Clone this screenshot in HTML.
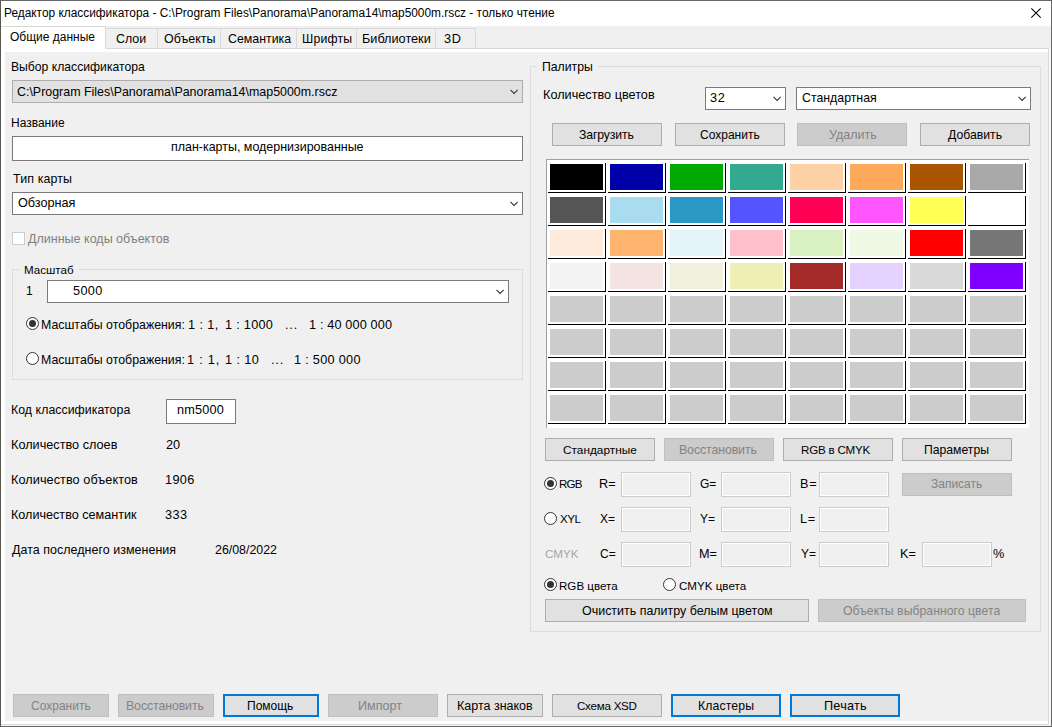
<!DOCTYPE html>
<html><head><meta charset="utf-8"><title>Редактор классификатора</title>
<style>
html,body{margin:0;padding:0;width:1052px;height:727px;overflow:hidden;background:#fff}
.b{position:absolute;box-sizing:border-box}
.t{position:absolute;font-family:"Liberation Sans",sans-serif;font-size:12px;line-height:12px;white-space:pre;color:#000}
</style></head><body>
<div class="b" style="left:0px;top:0px;width:1052px;height:727px;background:#ffffff;border:1px solid #676767;border-left-color:#58564f"></div>
<div class="b" style="left:1px;top:26px;width:1050px;height:22px;background:#f0f0f0"></div>
<div class="b" style="left:1px;top:48px;width:1048px;height:677px;background:#ffffff;border:1px solid #d9d9d9;border-left:none"></div>
<div class="b" style="left:1049px;top:48px;width:2px;height:678px;background:#f7f7f7"></div>
<div class="b" style="left:1px;top:725px;width:1050px;height:1px;background:#f7f7f7"></div>
<div class="b" style="left:5px;top:52px;width:1043px;height:669px;background:#f0f0f0"></div>
<div class="b" style="left:105px;top:28px;width:53px;height:21px;background:#f0f0f0;border:1px solid #d9d9d9"></div>
<div class="b" style="left:157px;top:28px;width:64px;height:21px;background:#f0f0f0;border:1px solid #d9d9d9"></div>
<div class="b" style="left:220px;top:28px;width:77px;height:21px;background:#f0f0f0;border:1px solid #d9d9d9"></div>
<div class="b" style="left:296px;top:28px;width:61px;height:21px;background:#f0f0f0;border:1px solid #d9d9d9"></div>
<div class="b" style="left:356px;top:28px;width:80px;height:21px;background:#f0f0f0;border:1px solid #d9d9d9"></div>
<div class="b" style="left:435px;top:28px;width:41px;height:21px;background:#f0f0f0;border:1px solid #d9d9d9"></div>
<div class="b" style="left:1px;top:27px;width:104px;height:25px;background:#ffffff"></div>
<div class="b" style="left:1px;top:26px;width:105px;height:1px;background:#d9d9d9"></div>
<div class="b" style="left:105px;top:26px;width:1px;height:23px;background:#d9d9d9"></div>
<div class="b" style="left:12px;top:80px;width:511px;height:23px;background:#e1e1e1;border:1px solid #adadad"></div>
<svg class="b" style="left:510px;top:89px" width="10" height="7" viewBox="0 0 10 7"><polyline points="0.5,0.95 4.1,4.45 7.7,0.95" fill="none" stroke="#333" stroke-width="1.05"/></svg>
<div class="b" style="left:12px;top:136px;width:511px;height:25px;background:#ffffff;border:1px solid #7a7a7a"></div>
<div class="b" style="left:12px;top:192px;width:511px;height:23px;background:#fff;border:1px solid #7a7a7a"></div>
<svg class="b" style="left:510px;top:201px" width="10" height="7" viewBox="0 0 10 7"><polyline points="0.5,0.95 4.1,4.45 7.7,0.95" fill="none" stroke="#333" stroke-width="1.05"/></svg>
<div class="b" style="left:12px;top:232px;width:13px;height:13px;background:#ffffff;border:1px solid #cccccc"></div>
<div class="b" style="left:12px;top:269px;width:511px;height:111px;border:1px solid #dcdcdc"></div>
<div class="b" style="left:19px;top:269px;width:60px;height:1px;background:#f0f0f0"></div>
<div class="b" style="left:47px;top:280px;width:462px;height:23px;background:#fff;border:1px solid #7a7a7a"></div>
<svg class="b" style="left:496px;top:289px" width="10" height="7" viewBox="0 0 10 7"><polyline points="0.5,0.95 4.1,4.45 7.7,0.95" fill="none" stroke="#333" stroke-width="1.05"/></svg>
<svg class="b" style="left:26px;top:317px" width="13" height="13" viewBox="0 0 13 13"><circle cx="6.5" cy="6.5" r="6" fill="#fff" stroke="#333" stroke-width="1"/><circle cx="6.5" cy="6.5" r="3.5" fill="#333"/></svg>
<svg class="b" style="left:26px;top:352px" width="13" height="13" viewBox="0 0 13 13"><circle cx="6.5" cy="6.5" r="6" fill="#fff" stroke="#333" stroke-width="1"/></svg>
<div class="b" style="left:166px;top:399px;width:70px;height:25px;background:#ffffff;border:1px solid #7a7a7a"></div>
<div class="b" style="left:530px;top:66px;width:511px;height:566px;border:1px solid #dcdcdc"></div>
<div class="b" style="left:537px;top:66px;width:61px;height:1px;background:#f0f0f0"></div>
<div class="b" style="left:705px;top:87px;width:81px;height:23px;background:#fff;border:1px solid #7a7a7a"></div>
<svg class="b" style="left:773px;top:96px" width="10" height="7" viewBox="0 0 10 7"><polyline points="0.5,0.95 4.1,4.45 7.7,0.95" fill="none" stroke="#333" stroke-width="1.05"/></svg>
<div class="b" style="left:796px;top:87px;width:235px;height:23px;background:#fff;border:1px solid #7a7a7a"></div>
<svg class="b" style="left:1018px;top:96px" width="10" height="7" viewBox="0 0 10 7"><polyline points="0.5,0.95 4.1,4.45 7.7,0.95" fill="none" stroke="#333" stroke-width="1.05"/></svg>
<div class="b" style="left:552px;top:123px;width:110px;height:23px;background:#e1e1e1;border:1px solid #adadad"></div>
<div class="b" style="left:675px;top:123px;width:110px;height:23px;background:#e1e1e1;border:1px solid #adadad"></div>
<div class="b" style="left:797px;top:123px;width:110px;height:23px;background:#cccccc;border:1px solid #bfbfbf"></div>
<div class="b" style="left:920px;top:123px;width:110px;height:23px;background:#e1e1e1;border:1px solid #adadad"></div>
<div class="b" style="left:546px;top:159px;width:483px;height:269px;background:#ffffff;border-top:1px solid #a0a0a0;border-left:1px solid #a0a0a0"></div>
<div class="b" style="left:550px;top:164px;width:53px;height:26px;background:#000000"></div>
<div class="b" style="left:605px;top:163px;width:1px;height:30px;background:#000"></div>
<div class="b" style="left:548px;top:192px;width:58px;height:1px;background:#000"></div>
<div class="b" style="left:610px;top:164px;width:53px;height:26px;background:#0000a8"></div>
<div class="b" style="left:665px;top:163px;width:1px;height:30px;background:#000"></div>
<div class="b" style="left:608px;top:192px;width:58px;height:1px;background:#000"></div>
<div class="b" style="left:670px;top:164px;width:53px;height:26px;background:#00aa00"></div>
<div class="b" style="left:725px;top:163px;width:1px;height:30px;background:#000"></div>
<div class="b" style="left:668px;top:192px;width:58px;height:1px;background:#000"></div>
<div class="b" style="left:730px;top:164px;width:53px;height:26px;background:#33aa8f"></div>
<div class="b" style="left:785px;top:163px;width:1px;height:30px;background:#000"></div>
<div class="b" style="left:728px;top:192px;width:58px;height:1px;background:#000"></div>
<div class="b" style="left:790px;top:164px;width:53px;height:26px;background:#fdd1a5"></div>
<div class="b" style="left:845px;top:163px;width:1px;height:30px;background:#000"></div>
<div class="b" style="left:788px;top:192px;width:58px;height:1px;background:#000"></div>
<div class="b" style="left:850px;top:164px;width:53px;height:26px;background:#fea95a"></div>
<div class="b" style="left:905px;top:163px;width:1px;height:30px;background:#000"></div>
<div class="b" style="left:848px;top:192px;width:58px;height:1px;background:#000"></div>
<div class="b" style="left:910px;top:164px;width:53px;height:26px;background:#aa5500"></div>
<div class="b" style="left:965px;top:163px;width:1px;height:30px;background:#000"></div>
<div class="b" style="left:908px;top:192px;width:58px;height:1px;background:#000"></div>
<div class="b" style="left:970px;top:164px;width:53px;height:26px;background:#a9a9a9"></div>
<div class="b" style="left:1025px;top:163px;width:1px;height:30px;background:#000"></div>
<div class="b" style="left:968px;top:192px;width:58px;height:1px;background:#000"></div>
<div class="b" style="left:550px;top:197px;width:53px;height:26px;background:#555555"></div>
<div class="b" style="left:605px;top:196px;width:1px;height:30px;background:#000"></div>
<div class="b" style="left:548px;top:225px;width:58px;height:1px;background:#000"></div>
<div class="b" style="left:610px;top:197px;width:53px;height:26px;background:#a9dcee"></div>
<div class="b" style="left:665px;top:196px;width:1px;height:30px;background:#000"></div>
<div class="b" style="left:608px;top:225px;width:58px;height:1px;background:#000"></div>
<div class="b" style="left:670px;top:197px;width:53px;height:26px;background:#2a97c5"></div>
<div class="b" style="left:725px;top:196px;width:1px;height:30px;background:#000"></div>
<div class="b" style="left:668px;top:225px;width:58px;height:1px;background:#000"></div>
<div class="b" style="left:730px;top:197px;width:53px;height:26px;background:#5555ff"></div>
<div class="b" style="left:785px;top:196px;width:1px;height:30px;background:#000"></div>
<div class="b" style="left:728px;top:225px;width:58px;height:1px;background:#000"></div>
<div class="b" style="left:790px;top:197px;width:53px;height:26px;background:#ff0055"></div>
<div class="b" style="left:845px;top:196px;width:1px;height:30px;background:#000"></div>
<div class="b" style="left:788px;top:225px;width:58px;height:1px;background:#000"></div>
<div class="b" style="left:850px;top:197px;width:53px;height:26px;background:#ff55ff"></div>
<div class="b" style="left:905px;top:196px;width:1px;height:30px;background:#000"></div>
<div class="b" style="left:848px;top:225px;width:58px;height:1px;background:#000"></div>
<div class="b" style="left:910px;top:197px;width:53px;height:26px;background:#ffff55"></div>
<div class="b" style="left:965px;top:196px;width:1px;height:30px;background:#000"></div>
<div class="b" style="left:908px;top:225px;width:58px;height:1px;background:#000"></div>
<div class="b" style="left:970px;top:197px;width:53px;height:26px;background:#ffffff"></div>
<div class="b" style="left:1025px;top:196px;width:1px;height:30px;background:#000"></div>
<div class="b" style="left:968px;top:225px;width:58px;height:1px;background:#000"></div>
<div class="b" style="left:550px;top:230px;width:53px;height:26px;background:#fdeadb"></div>
<div class="b" style="left:605px;top:229px;width:1px;height:30px;background:#000"></div>
<div class="b" style="left:548px;top:258px;width:58px;height:1px;background:#000"></div>
<div class="b" style="left:610px;top:230px;width:53px;height:26px;background:#ffb46d"></div>
<div class="b" style="left:665px;top:229px;width:1px;height:30px;background:#000"></div>
<div class="b" style="left:608px;top:258px;width:58px;height:1px;background:#000"></div>
<div class="b" style="left:670px;top:230px;width:53px;height:26px;background:#e5f3fb"></div>
<div class="b" style="left:725px;top:229px;width:1px;height:30px;background:#000"></div>
<div class="b" style="left:668px;top:258px;width:58px;height:1px;background:#000"></div>
<div class="b" style="left:730px;top:230px;width:53px;height:26px;background:#ffc0cb"></div>
<div class="b" style="left:785px;top:229px;width:1px;height:30px;background:#000"></div>
<div class="b" style="left:728px;top:258px;width:58px;height:1px;background:#000"></div>
<div class="b" style="left:790px;top:230px;width:53px;height:26px;background:#d9f1c1"></div>
<div class="b" style="left:845px;top:229px;width:1px;height:30px;background:#000"></div>
<div class="b" style="left:788px;top:258px;width:58px;height:1px;background:#000"></div>
<div class="b" style="left:850px;top:230px;width:53px;height:26px;background:#f0f8e6"></div>
<div class="b" style="left:905px;top:229px;width:1px;height:30px;background:#000"></div>
<div class="b" style="left:848px;top:258px;width:58px;height:1px;background:#000"></div>
<div class="b" style="left:910px;top:230px;width:53px;height:26px;background:#ff0000"></div>
<div class="b" style="left:965px;top:229px;width:1px;height:30px;background:#000"></div>
<div class="b" style="left:908px;top:258px;width:58px;height:1px;background:#000"></div>
<div class="b" style="left:970px;top:230px;width:53px;height:26px;background:#777777"></div>
<div class="b" style="left:1025px;top:229px;width:1px;height:30px;background:#000"></div>
<div class="b" style="left:968px;top:258px;width:58px;height:1px;background:#000"></div>
<div class="b" style="left:550px;top:263px;width:53px;height:26px;background:#f3f3f3"></div>
<div class="b" style="left:605px;top:262px;width:1px;height:30px;background:#000"></div>
<div class="b" style="left:548px;top:291px;width:58px;height:1px;background:#000"></div>
<div class="b" style="left:610px;top:263px;width:53px;height:26px;background:#f3e3e3"></div>
<div class="b" style="left:665px;top:262px;width:1px;height:30px;background:#000"></div>
<div class="b" style="left:608px;top:291px;width:58px;height:1px;background:#000"></div>
<div class="b" style="left:670px;top:263px;width:53px;height:26px;background:#f1f0dc"></div>
<div class="b" style="left:725px;top:262px;width:1px;height:30px;background:#000"></div>
<div class="b" style="left:668px;top:291px;width:58px;height:1px;background:#000"></div>
<div class="b" style="left:730px;top:263px;width:53px;height:26px;background:#efefb5"></div>
<div class="b" style="left:785px;top:262px;width:1px;height:30px;background:#000"></div>
<div class="b" style="left:728px;top:291px;width:58px;height:1px;background:#000"></div>
<div class="b" style="left:790px;top:263px;width:53px;height:26px;background:#a52a2a"></div>
<div class="b" style="left:845px;top:262px;width:1px;height:30px;background:#000"></div>
<div class="b" style="left:788px;top:291px;width:58px;height:1px;background:#000"></div>
<div class="b" style="left:850px;top:263px;width:53px;height:26px;background:#e6d2ff"></div>
<div class="b" style="left:905px;top:262px;width:1px;height:30px;background:#000"></div>
<div class="b" style="left:848px;top:291px;width:58px;height:1px;background:#000"></div>
<div class="b" style="left:910px;top:263px;width:53px;height:26px;background:#d9d9d9"></div>
<div class="b" style="left:965px;top:262px;width:1px;height:30px;background:#000"></div>
<div class="b" style="left:908px;top:291px;width:58px;height:1px;background:#000"></div>
<div class="b" style="left:970px;top:263px;width:53px;height:26px;background:#8000ff"></div>
<div class="b" style="left:1025px;top:262px;width:1px;height:30px;background:#000"></div>
<div class="b" style="left:968px;top:291px;width:58px;height:1px;background:#000"></div>
<div class="b" style="left:550px;top:296px;width:53px;height:26px;background:#cccccc"></div>
<div class="b" style="left:605px;top:295px;width:1px;height:30px;background:#000"></div>
<div class="b" style="left:548px;top:324px;width:58px;height:1px;background:#000"></div>
<div class="b" style="left:610px;top:296px;width:53px;height:26px;background:#cccccc"></div>
<div class="b" style="left:665px;top:295px;width:1px;height:30px;background:#000"></div>
<div class="b" style="left:608px;top:324px;width:58px;height:1px;background:#000"></div>
<div class="b" style="left:670px;top:296px;width:53px;height:26px;background:#cccccc"></div>
<div class="b" style="left:725px;top:295px;width:1px;height:30px;background:#000"></div>
<div class="b" style="left:668px;top:324px;width:58px;height:1px;background:#000"></div>
<div class="b" style="left:730px;top:296px;width:53px;height:26px;background:#cccccc"></div>
<div class="b" style="left:785px;top:295px;width:1px;height:30px;background:#000"></div>
<div class="b" style="left:728px;top:324px;width:58px;height:1px;background:#000"></div>
<div class="b" style="left:790px;top:296px;width:53px;height:26px;background:#cccccc"></div>
<div class="b" style="left:845px;top:295px;width:1px;height:30px;background:#000"></div>
<div class="b" style="left:788px;top:324px;width:58px;height:1px;background:#000"></div>
<div class="b" style="left:850px;top:296px;width:53px;height:26px;background:#cccccc"></div>
<div class="b" style="left:905px;top:295px;width:1px;height:30px;background:#000"></div>
<div class="b" style="left:848px;top:324px;width:58px;height:1px;background:#000"></div>
<div class="b" style="left:910px;top:296px;width:53px;height:26px;background:#cccccc"></div>
<div class="b" style="left:965px;top:295px;width:1px;height:30px;background:#000"></div>
<div class="b" style="left:908px;top:324px;width:58px;height:1px;background:#000"></div>
<div class="b" style="left:970px;top:296px;width:53px;height:26px;background:#cccccc"></div>
<div class="b" style="left:1025px;top:295px;width:1px;height:30px;background:#000"></div>
<div class="b" style="left:968px;top:324px;width:58px;height:1px;background:#000"></div>
<div class="b" style="left:550px;top:329px;width:53px;height:26px;background:#cccccc"></div>
<div class="b" style="left:605px;top:328px;width:1px;height:30px;background:#000"></div>
<div class="b" style="left:548px;top:357px;width:58px;height:1px;background:#000"></div>
<div class="b" style="left:610px;top:329px;width:53px;height:26px;background:#cccccc"></div>
<div class="b" style="left:665px;top:328px;width:1px;height:30px;background:#000"></div>
<div class="b" style="left:608px;top:357px;width:58px;height:1px;background:#000"></div>
<div class="b" style="left:670px;top:329px;width:53px;height:26px;background:#cccccc"></div>
<div class="b" style="left:725px;top:328px;width:1px;height:30px;background:#000"></div>
<div class="b" style="left:668px;top:357px;width:58px;height:1px;background:#000"></div>
<div class="b" style="left:730px;top:329px;width:53px;height:26px;background:#cccccc"></div>
<div class="b" style="left:785px;top:328px;width:1px;height:30px;background:#000"></div>
<div class="b" style="left:728px;top:357px;width:58px;height:1px;background:#000"></div>
<div class="b" style="left:790px;top:329px;width:53px;height:26px;background:#cccccc"></div>
<div class="b" style="left:845px;top:328px;width:1px;height:30px;background:#000"></div>
<div class="b" style="left:788px;top:357px;width:58px;height:1px;background:#000"></div>
<div class="b" style="left:850px;top:329px;width:53px;height:26px;background:#cccccc"></div>
<div class="b" style="left:905px;top:328px;width:1px;height:30px;background:#000"></div>
<div class="b" style="left:848px;top:357px;width:58px;height:1px;background:#000"></div>
<div class="b" style="left:910px;top:329px;width:53px;height:26px;background:#cccccc"></div>
<div class="b" style="left:965px;top:328px;width:1px;height:30px;background:#000"></div>
<div class="b" style="left:908px;top:357px;width:58px;height:1px;background:#000"></div>
<div class="b" style="left:970px;top:329px;width:53px;height:26px;background:#cccccc"></div>
<div class="b" style="left:1025px;top:328px;width:1px;height:30px;background:#000"></div>
<div class="b" style="left:968px;top:357px;width:58px;height:1px;background:#000"></div>
<div class="b" style="left:550px;top:362px;width:53px;height:26px;background:#cccccc"></div>
<div class="b" style="left:605px;top:361px;width:1px;height:30px;background:#000"></div>
<div class="b" style="left:548px;top:390px;width:58px;height:1px;background:#000"></div>
<div class="b" style="left:610px;top:362px;width:53px;height:26px;background:#cccccc"></div>
<div class="b" style="left:665px;top:361px;width:1px;height:30px;background:#000"></div>
<div class="b" style="left:608px;top:390px;width:58px;height:1px;background:#000"></div>
<div class="b" style="left:670px;top:362px;width:53px;height:26px;background:#cccccc"></div>
<div class="b" style="left:725px;top:361px;width:1px;height:30px;background:#000"></div>
<div class="b" style="left:668px;top:390px;width:58px;height:1px;background:#000"></div>
<div class="b" style="left:730px;top:362px;width:53px;height:26px;background:#cccccc"></div>
<div class="b" style="left:785px;top:361px;width:1px;height:30px;background:#000"></div>
<div class="b" style="left:728px;top:390px;width:58px;height:1px;background:#000"></div>
<div class="b" style="left:790px;top:362px;width:53px;height:26px;background:#cccccc"></div>
<div class="b" style="left:845px;top:361px;width:1px;height:30px;background:#000"></div>
<div class="b" style="left:788px;top:390px;width:58px;height:1px;background:#000"></div>
<div class="b" style="left:850px;top:362px;width:53px;height:26px;background:#cccccc"></div>
<div class="b" style="left:905px;top:361px;width:1px;height:30px;background:#000"></div>
<div class="b" style="left:848px;top:390px;width:58px;height:1px;background:#000"></div>
<div class="b" style="left:910px;top:362px;width:53px;height:26px;background:#cccccc"></div>
<div class="b" style="left:965px;top:361px;width:1px;height:30px;background:#000"></div>
<div class="b" style="left:908px;top:390px;width:58px;height:1px;background:#000"></div>
<div class="b" style="left:970px;top:362px;width:53px;height:26px;background:#cccccc"></div>
<div class="b" style="left:1025px;top:361px;width:1px;height:30px;background:#000"></div>
<div class="b" style="left:968px;top:390px;width:58px;height:1px;background:#000"></div>
<div class="b" style="left:550px;top:395px;width:53px;height:26px;background:#cccccc"></div>
<div class="b" style="left:605px;top:394px;width:1px;height:30px;background:#000"></div>
<div class="b" style="left:548px;top:423px;width:58px;height:1px;background:#000"></div>
<div class="b" style="left:610px;top:395px;width:53px;height:26px;background:#cccccc"></div>
<div class="b" style="left:665px;top:394px;width:1px;height:30px;background:#000"></div>
<div class="b" style="left:608px;top:423px;width:58px;height:1px;background:#000"></div>
<div class="b" style="left:670px;top:395px;width:53px;height:26px;background:#cccccc"></div>
<div class="b" style="left:725px;top:394px;width:1px;height:30px;background:#000"></div>
<div class="b" style="left:668px;top:423px;width:58px;height:1px;background:#000"></div>
<div class="b" style="left:730px;top:395px;width:53px;height:26px;background:#cccccc"></div>
<div class="b" style="left:785px;top:394px;width:1px;height:30px;background:#000"></div>
<div class="b" style="left:728px;top:423px;width:58px;height:1px;background:#000"></div>
<div class="b" style="left:790px;top:395px;width:53px;height:26px;background:#cccccc"></div>
<div class="b" style="left:845px;top:394px;width:1px;height:30px;background:#000"></div>
<div class="b" style="left:788px;top:423px;width:58px;height:1px;background:#000"></div>
<div class="b" style="left:850px;top:395px;width:53px;height:26px;background:#cccccc"></div>
<div class="b" style="left:905px;top:394px;width:1px;height:30px;background:#000"></div>
<div class="b" style="left:848px;top:423px;width:58px;height:1px;background:#000"></div>
<div class="b" style="left:910px;top:395px;width:53px;height:26px;background:#cccccc"></div>
<div class="b" style="left:965px;top:394px;width:1px;height:30px;background:#000"></div>
<div class="b" style="left:908px;top:423px;width:58px;height:1px;background:#000"></div>
<div class="b" style="left:970px;top:395px;width:53px;height:26px;background:#cccccc"></div>
<div class="b" style="left:1025px;top:394px;width:1px;height:30px;background:#000"></div>
<div class="b" style="left:968px;top:423px;width:58px;height:1px;background:#000"></div>
<div class="b" style="left:545px;top:438px;width:110px;height:23px;background:#e1e1e1;border:1px solid #adadad"></div>
<div class="b" style="left:664px;top:438px;width:110px;height:23px;background:#cccccc;border:1px solid #bfbfbf"></div>
<div class="b" style="left:783px;top:438px;width:110px;height:23px;background:#e1e1e1;border:1px solid #adadad"></div>
<div class="b" style="left:902px;top:438px;width:110px;height:23px;background:#e1e1e1;border:1px solid #adadad"></div>
<svg class="b" style="left:544px;top:477px" width="13" height="13" viewBox="0 0 13 13"><circle cx="6.5" cy="6.5" r="6" fill="#fff" stroke="#333" stroke-width="1"/><circle cx="6.5" cy="6.5" r="3.5" fill="#333"/></svg>
<svg class="b" style="left:544px;top:512px" width="13" height="13" viewBox="0 0 13 13"><circle cx="6.5" cy="6.5" r="6" fill="#fff" stroke="#333" stroke-width="1"/></svg>
<div class="b" style="left:621px;top:472px;width:70px;height:25px;background:#f0f0f0;border:1px solid #cccccc;box-shadow:inset 0 0 0 1px #fff"></div>
<div class="b" style="left:721px;top:472px;width:70px;height:25px;background:#f0f0f0;border:1px solid #cccccc;box-shadow:inset 0 0 0 1px #fff"></div>
<div class="b" style="left:819px;top:472px;width:70px;height:25px;background:#f0f0f0;border:1px solid #cccccc;box-shadow:inset 0 0 0 1px #fff"></div>
<div class="b" style="left:621px;top:507px;width:70px;height:25px;background:#f0f0f0;border:1px solid #cccccc;box-shadow:inset 0 0 0 1px #fff"></div>
<div class="b" style="left:721px;top:507px;width:70px;height:25px;background:#f0f0f0;border:1px solid #cccccc;box-shadow:inset 0 0 0 1px #fff"></div>
<div class="b" style="left:819px;top:507px;width:70px;height:25px;background:#f0f0f0;border:1px solid #cccccc;box-shadow:inset 0 0 0 1px #fff"></div>
<div class="b" style="left:621px;top:542px;width:70px;height:25px;background:#f0f0f0;border:1px solid #cccccc;box-shadow:inset 0 0 0 1px #fff"></div>
<div class="b" style="left:721px;top:542px;width:70px;height:25px;background:#f0f0f0;border:1px solid #cccccc;box-shadow:inset 0 0 0 1px #fff"></div>
<div class="b" style="left:819px;top:542px;width:70px;height:25px;background:#f0f0f0;border:1px solid #cccccc;box-shadow:inset 0 0 0 1px #fff"></div>
<div class="b" style="left:922px;top:542px;width:70px;height:25px;background:#f0f0f0;border:1px solid #cccccc;box-shadow:inset 0 0 0 1px #fff"></div>
<div class="b" style="left:902px;top:473px;width:110px;height:23px;background:#cccccc;border:1px solid #bfbfbf"></div>
<svg class="b" style="left:544px;top:578px" width="13" height="13" viewBox="0 0 13 13"><circle cx="6.5" cy="6.5" r="6" fill="#fff" stroke="#333" stroke-width="1"/><circle cx="6.5" cy="6.5" r="3.5" fill="#333"/></svg>
<svg class="b" style="left:663px;top:578px" width="13" height="13" viewBox="0 0 13 13"><circle cx="6.5" cy="6.5" r="6" fill="#fff" stroke="#333" stroke-width="1"/></svg>
<div class="b" style="left:545px;top:599px;width:264px;height:23px;background:#e1e1e1;border:1px solid #adadad"></div>
<div class="b" style="left:818px;top:599px;width:208px;height:23px;background:#cccccc;border:1px solid #bfbfbf"></div>
<div class="b" style="left:13px;top:694px;width:96px;height:23px;background:#cccccc;border:1px solid #bfbfbf"></div>
<div class="b" style="left:118px;top:694px;width:96px;height:23px;background:#cccccc;border:1px solid #bfbfbf"></div>
<div class="b" style="left:223px;top:694px;width:96px;height:23px;background:#e1e1e1;border:2px solid #0078d7"></div>
<div class="b" style="left:328px;top:694px;width:110px;height:23px;background:#cccccc;border:1px solid #bfbfbf"></div>
<div class="b" style="left:447px;top:694px;width:96px;height:23px;background:#e1e1e1;border:1px solid #adadad"></div>
<div class="b" style="left:552px;top:694px;width:110px;height:23px;background:#e1e1e1;border:1px solid #adadad"></div>
<div class="b" style="left:671px;top:694px;width:110px;height:23px;background:#e1e1e1;border:2px solid #0078d7"></div>
<div class="b" style="left:790px;top:694px;width:110px;height:23px;background:#e1e1e1;border:2px solid #0078d7"></div>
<svg class="b" style="left:1030px;top:7px" width="13" height="13" viewBox="0 0 13 13"><path d="M1.3 1.3L10.7 10.7M10.7 1.3L1.3 10.7" stroke="#000" stroke-width="1.05" fill="none"/></svg>
<div class="t" style="left:4px;top:7px;font-size:11.87px;letter-spacing:0.01px">Редактор классификатора - C:\Program Files\Panorama\Panorama14\map5000m.rscz - только чтение</div>
<div class="t" style="left:10px;top:31px;font-size:12.0px">Общие данные</div>
<div class="t" style="left:116px;top:33px;font-size:12.41px">Слои</div>
<div class="t" style="left:164px;top:33px;font-size:12.49px">Объекты</div>
<div class="t" style="left:228px;top:33px;font-size:12.39px">Семантика</div>
<div class="t" style="left:302px;top:33px;font-size:12.26px;letter-spacing:0.2px">Шрифты</div>
<div class="t" style="left:362px;top:33px;font-size:12.7px">Библиотеки</div>
<div class="t" style="left:444px;top:33px;font-size:12.7px;letter-spacing:0.8px">3D</div>
<div class="t" style="left:11px;top:61px;font-size:12.18px">Выбор классификатора</div>
<div class="t" style="left:17px;top:86px;font-size:12.43px">C:\Program Files\Panorama\Panorama14\map5000m.rscz</div>
<div class="t" style="left:11px;top:117px;font-size:12.0px">Название</div>
<div class="t" style="left:171px;top:141px;font-size:12.46px">план-карты, модернизированные</div>
<div class="t" style="left:13px;top:173px;font-size:12.43px;letter-spacing:0.12px">Тип карты</div>
<div class="t" style="left:18px;top:197px;font-size:12.67px">Обзорная</div>
<div class="t" style="left:28px;top:233px;font-size:12.53px;color:#808080">Длинные коды объектов</div>
<div class="t" style="left:24px;top:264px;font-size:11.6px">Масштаб</div>
<div class="t" style="left:26px;top:285px;font-size:12.0px">1</div>
<div class="t" style="left:73px;top:285px;font-size:12.7px;letter-spacing:0.33px">5000</div>
<div class="t" style="left:41px;top:319px;font-size:12.35px">Масштабы отображения:</div>
<div class="t" style="left:188px;top:319px;font-size:12.7px;letter-spacing:0.4px">1 : 1,</div>
<div class="t" style="left:225px;top:319px;font-size:12.7px;letter-spacing:0.29px">1 : 1000</div>
<div class="t" style="left:285px;top:319px;font-size:12.7px;letter-spacing:0.8px">...</div>
<div class="t" style="left:309px;top:319px;font-size:12.7px;letter-spacing:0.15px">1 : 40 000 000</div>
<div class="t" style="left:41px;top:354px;font-size:12.35px">Масштабы отображения:</div>
<div class="t" style="left:187px;top:354px;font-size:12.7px;letter-spacing:0.8px">1 : 1,</div>
<div class="t" style="left:225px;top:354px;font-size:12.7px;letter-spacing:0.4px">1 : 10</div>
<div class="t" style="left:271px;top:354px;font-size:12.7px;letter-spacing:0.8px">...</div>
<div class="t" style="left:294px;top:354px;font-size:12.7px;letter-spacing:0.3px">1 : 500 000</div>
<div class="t" style="left:11px;top:404px;font-size:12.31px;letter-spacing:0.06px">Код классификатора</div>
<div class="t" style="left:177px;top:404px;font-size:12.7px;letter-spacing:0.2px">nm5000</div>
<div class="t" style="left:11px;top:439px;font-size:12.7px">Количество слоев</div>
<div class="t" style="left:166px;top:439px;font-size:12.7px">20</div>
<div class="t" style="left:11px;top:474px;font-size:12.7px;letter-spacing:0.06px">Количество объектов</div>
<div class="t" style="left:165px;top:474px;font-size:12.7px;letter-spacing:0.33px">1906</div>
<div class="t" style="left:11px;top:509px;font-size:12.61px">Количество семантик</div>
<div class="t" style="left:165px;top:509px;font-size:12.7px;letter-spacing:0.5px">333</div>
<div class="t" style="left:12px;top:544px;font-size:12.46px;letter-spacing:0.04px">Дата последнего изменения</div>
<div class="t" style="left:215px;top:544px;font-size:12.4px">26/08/2022</div>
<div class="t" style="left:542px;top:61px;font-size:12.25px">Палитры</div>
<div class="t" style="left:543px;top:89px;font-size:12.69px">Количество цветов</div>
<div class="t" style="left:710px;top:92px;font-size:12.7px;letter-spacing:0.8px">32</div>
<div class="t" style="left:802px;top:92px;font-size:12.33px">Стандартная</div>
<div class="t" style="left:579px;top:129px;font-size:12.23px;letter-spacing:-0.12px">Загрузить</div>
<div class="t" style="left:700px;top:129px;font-size:12.0px">Сохранить</div>
<div class="t" style="left:829px;top:129px;font-size:12.53px;color:#838383">Удалить</div>
<div class="t" style="left:948px;top:129px;font-size:12.23px">Добавить</div>
<div class="t" style="left:563px;top:444px;font-size:11.84px">Стандартные</div>
<div class="t" style="left:679px;top:444px;font-size:12.32px;letter-spacing:-0.09px;color:#838383">Восстановить</div>
<div class="t" style="left:801px;top:444px;font-size:11.6px;letter-spacing:-0.22px">RGB в CMYK</div>
<div class="t" style="left:924px;top:444px;font-size:12.19px">Параметры</div>
<div class="t" style="left:559px;top:478px;font-size:11.6px;letter-spacing:-0.8px">RGB</div>
<div class="t" style="left:599px;top:478px;font-size:12.7px">R=</div>
<div class="t" style="left:700px;top:478px;font-size:12.0px">G=</div>
<div class="t" style="left:800px;top:478px;font-size:12.7px;letter-spacing:0.8px">B=</div>
<div class="t" style="left:931px;top:478px;font-size:12.0px;color:#838383">Записать</div>
<div class="t" style="left:560px;top:513px;font-size:11.6px;letter-spacing:-0.5px">XYL</div>
<div class="t" style="left:600px;top:513px;font-size:12.0px">X=</div>
<div class="t" style="left:700px;top:513px;font-size:12.0px">Y=</div>
<div class="t" style="left:800px;top:513px;font-size:12.7px;letter-spacing:0.8px">L=</div>
<div class="t" style="left:545px;top:548px;font-size:11.6px;color:#a6a6a6">CMYK</div>
<div class="t" style="left:600px;top:548px;font-size:12.0px">C=</div>
<div class="t" style="left:699px;top:548px;font-size:12.7px">M=</div>
<div class="t" style="left:801px;top:548px;font-size:12.0px">Y=</div>
<div class="t" style="left:900px;top:548px;font-size:12.7px">K=</div>
<div class="t" style="left:993px;top:548px;font-size:12.7px">%</div>
<div class="t" style="left:559px;top:580px;font-size:11.6px">RGB цвета</div>
<div class="t" style="left:679px;top:580px;font-size:11.6px">CMYK цвета</div>
<div class="t" style="left:582px;top:605px;font-size:12.46px">Очистить палитру белым цветом</div>
<div class="t" style="left:843px;top:605px;font-size:12.23px;letter-spacing:0.04px;color:#838383">Объекты выбранного цвета</div>
<div class="t" style="left:31px;top:700px;font-size:12.0px;color:#838383">Сохранить</div>
<div class="t" style="left:126px;top:700px;font-size:12.32px;letter-spacing:-0.09px;color:#838383">Восстановить</div>
<div class="t" style="left:247px;top:700px;font-size:12.0px">Помощь</div>
<div class="t" style="left:358px;top:700px;font-size:12.59px;color:#838383">Импорт</div>
<div class="t" style="left:457px;top:700px;font-size:12.51px">Карта знаков</div>
<div class="t" style="left:577px;top:700px;font-size:11.6px;letter-spacing:-0.25px">Схема XSD</div>
<div class="t" style="left:698px;top:700px;font-size:12.23px;letter-spacing:0.14px">Кластеры</div>
<div class="t" style="left:824px;top:700px;font-size:12.7px;letter-spacing:0.2px">Печать</div>
</body></html>
